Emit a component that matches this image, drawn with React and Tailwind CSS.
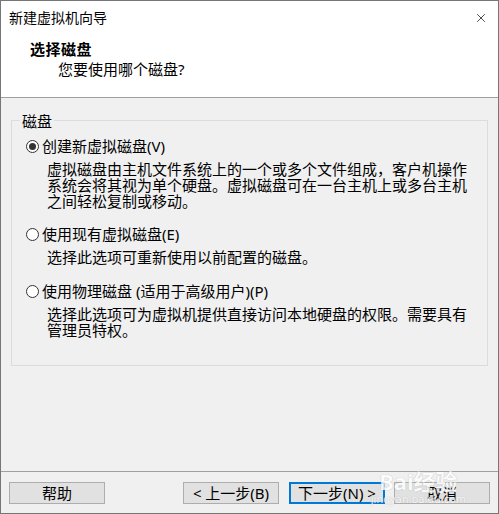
import { X } from "lucide-react";

const font = "font-['Noto_Sans','Noto_Sans_CJK_SC',sans-serif]";

function Radio({ checked }) {
    return (
        <span className="flex h-[13px] w-[13px] shrink-0 items-center justify-center rounded-full border border-[#333333] bg-white">
            {checked && <span className="h-[7px] w-[7px] rounded-full bg-[#333333]" />}
        </span>
    );
}

function Option({ checked, label, lines, className }) {
    return (
        <div className={className}>
            <div className="flex items-center gap-[3px] pl-[14px] text-[15px] leading-4">
                <Radio checked={checked} />
                <span className="whitespace-nowrap">{label}</span>
            </div>
            <div className="mt-[7px] pl-[35px] text-[15px] leading-4">
                {lines.map((line) => (
                    <div key={line} className="whitespace-nowrap">
                        {line}
                    </div>
                ))}
            </div>
        </div>
    );
}

function Button({ children, primary }) {
    return (
        <button
            type="button"
            className={`flex h-[22px] w-[96px] items-center justify-center text-[15px] leading-4 ${
                primary
                    ? "border-2 border-[#0078d7] bg-[#e1e1e1]"
                    : "border border-[#adadad] bg-[#e1e1e1]"
            }`}
        >
            {children}
        </button>
    );
}

export default function App() {
    return (
        <div
            className={`relative flex h-[514px] w-[499px] flex-col overflow-hidden border border-[#767676] bg-[#f0f0f0] text-black ${font}`}
        >
            {/* title bar + header */}
            <div className="h-[97px] shrink-0 border-b border-[#a0a0a0] bg-white">
                <div className="flex items-center justify-between pl-[8px] pr-[10px] pt-[7px]">
                    <span className="text-[14px] leading-5">新建虚拟机向导</span>
                    <X className="h-[14px] w-[14px]" strokeWidth={1.2} />
                </div>
                <div className="mt-[11px] pl-[29px] text-[15px] font-bold leading-5 tracking-[0.5px]">
                    选择磁盘
                </div>
                <div className="pl-[57px] text-[15px] leading-5">您要使用哪个磁盘?</div>
            </div>

            {/* group box */}
            <div className="relative ml-[10px] mt-[22px] h-[246px] w-[477px] border border-[#dcdcdc] pt-[17px]">
                <span className="absolute left-[8px] top-[-10px] bg-[#f0f0f0] px-[2px] text-[15px] leading-5">
                    磁盘
                </span>
                <Option
                    checked
                    label="创建新虚拟磁盘(V)"
                    lines={[
                        "虚拟磁盘由主机文件系统上的一个或多个文件组成，客户机操作",
                        "系统会将其视为单个硬盘。虚拟磁盘可在一台主机上或多台主机",
                        "之间轻松复制或移动。",
                    ]}
                />
                <Option
                    className="mt-[17px]"
                    label="使用现有虚拟磁盘(E)"
                    lines={["选择此选项可重新使用以前配置的磁盘。"]}
                />
                <Option
                    className="mt-[18px]"
                    label="使用物理磁盘 (适用于高级用户)(P)"
                    lines={[
                        "选择此选项可为虚拟机提供直接访问本地硬盘的权限。需要具有",
                        "管理员特权。",
                    ]}
                />
            </div>

            {/* footer */}
            <div className="mt-auto flex h-[42px] shrink-0 items-start border-t border-[#a0a0a0] px-[8px] pt-[10px]">
                <Button>帮助</Button>
                <div className="ml-auto flex gap-[9px]">
                    <div className="flex gap-[10px]">
                        <Button>&lt; 上一步(B)</Button>
                        <Button primary>下一步(N) &gt;</Button>
                    </div>
                    <Button>取消</Button>
                </div>
            </div>

            {/* watermark */}
            <div className="pointer-events-none absolute bottom-[8px] right-[32px] flex flex-col items-center text-white opacity-80 [text-shadow:0_0_1px_#9a9a9a]">
                <span className="text-[22px] font-bold leading-6">Bai经验</span>
                <span className="text-[11px] leading-3">jingyan.baidu.com</span>
            </div>
        </div>
    );
}
